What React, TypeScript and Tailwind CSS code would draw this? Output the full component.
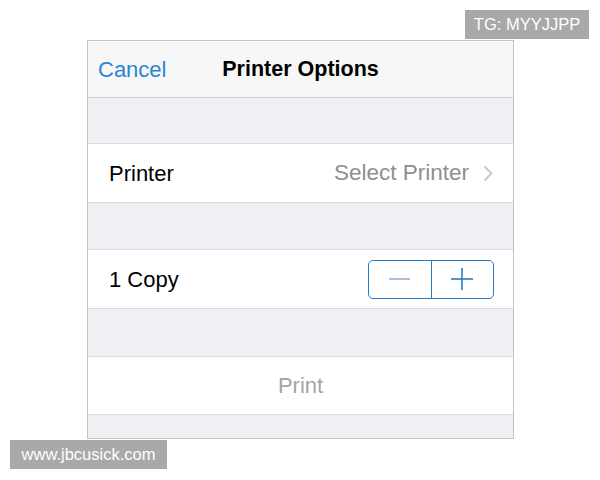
export default function App() {
  const font = { fontFamily: '"Liberation Sans", Arial, sans-serif' };
  return (
    <div className="relative w-[600px] h-[480px] bg-white pt-[40px] pl-[87px]" style={font}>
      <div className="w-[427px] h-[399px] border border-[#c4c4c4] flex flex-col bg-[#efeff4]">
        <div className="h-[57px] shrink-0 bg-[#f7f7f7] border-b border-[#cfcfd3] relative flex items-center">
          <span className="pl-[10px] text-[22px] text-[#2a86d2]">Cancel</span>
          <span className="absolute left-0 right-0 text-center text-[21.5px] font-bold text-black pointer-events-none">Printer Options</span>
        </div>
        <div className="h-[46px] shrink-0 border-b border-[#dcdce0]" />
        <div className="h-[59px] shrink-0 bg-white border-b border-[#dcdce0] flex items-center pl-[21px] pr-[20px]">
          <span className="text-[22px] text-black">Printer</span>
          <span className="ml-auto text-[22.5px] text-[#8e8e93]">Select Printer</span>
          <svg className="ml-[14px]" width="10" height="17" viewBox="0 0 10 17" fill="none">
            <polyline points="1.5,1.5 8.5,8.5 1.5,15.5" stroke="#c7c7cc" strokeWidth="1.8" />
          </svg>
        </div>
        <div className="h-[47px] shrink-0 border-b border-[#dcdce0]" />
        <div className="h-[59px] shrink-0 bg-white border-b border-[#dcdce0] flex items-center pl-[21px] pr-[19px]">
          <span className="text-[22px] text-black">1 Copy</span>
          <div className="ml-auto flex h-[39px] w-[126px] border border-[#2b7bc4] rounded-[5px]">
            <div className="flex-1 flex items-center justify-center border-r border-[#2b7bc4]">
              <div className="w-[21px] h-[1.5px] bg-[#a9c2d8]" />
            </div>
            <div className="flex-1 flex items-center justify-center">
              <svg width="22" height="22" viewBox="0 0 22 22">
                <line x1="11" y1="0" x2="11" y2="22" stroke="#2b7bc4" strokeWidth="1.6" />
                <line x1="0" y1="11" x2="22" y2="11" stroke="#2b7bc4" strokeWidth="1.6" />
              </svg>
            </div>
          </div>
        </div>
        <div className="h-[48px] shrink-0 border-b border-[#dcdce0]" />
        <div className="h-[58px] shrink-0 bg-white border-b border-[#dcdce0] flex items-center justify-center">
          <span className="text-[22px] text-[#a4a4a4]">Print</span>
        </div>
        <div className="flex-1" />
      </div>
      <div className="absolute left-[465px] top-[10px] w-[124px] h-[29px] bg-[#a9a9a9] text-white text-[16.5px] flex items-center justify-center">TG: MYYJJPP</div>
      <div className="absolute left-[10px] top-[440px] w-[157px] h-[29px] bg-[#a9a9a9] text-white text-[16.5px] flex items-center justify-center">www.jbcusick.com</div>
    </div>
  );
}
